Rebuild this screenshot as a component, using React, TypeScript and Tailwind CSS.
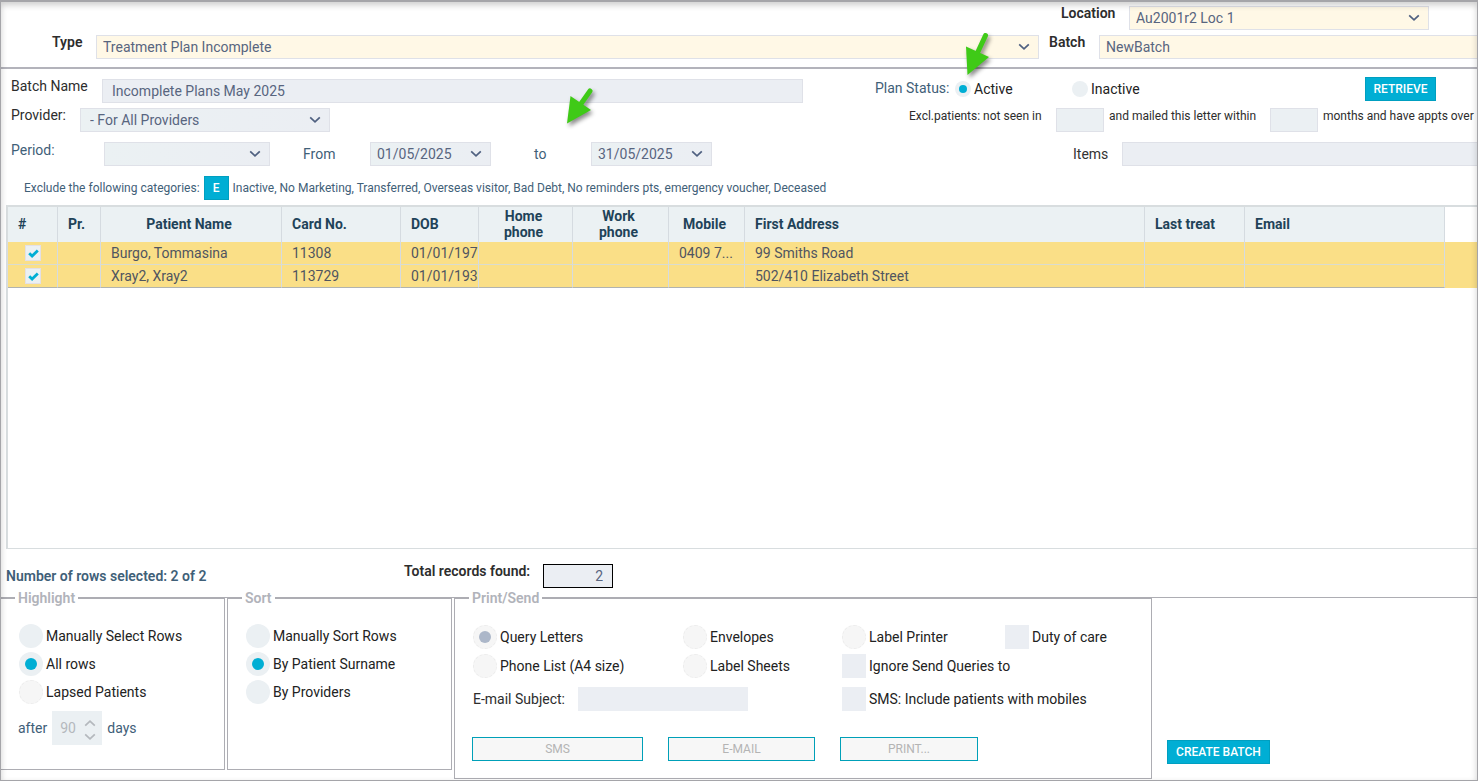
import type { InputHTMLAttributes, ReactNode } from "react";

const patients = [
  { name: "Burgo, Tommasina", card: "11308", dob: "01/01/197", mobile: "0409 7...", address: "99 Smiths Road" },
  { name: "Xray2, Xray2", card: "113729", dob: "01/01/193", mobile: "", address: "502/410 Elizabeth Street" },
];

const columns = [
  { title: "#", width: "w-[50px]", align: "text-left" },
  { title: "Pr.", width: "w-[43px]", align: "text-left" },
  { title: "Patient Name", width: "w-[181px]", align: "text-center" },
  { title: "Card No.", width: "w-[119px]", align: "text-left" },
  { title: "DOB", width: "w-[78px]", align: "text-left" },
  { title: "Home phone", width: "w-[94px]", align: "text-center" },
  { title: "Work phone", width: "w-[96px]", align: "text-center" },
  { title: "Mobile", width: "w-[76px]", align: "text-center" },
  { title: "First Address", width: "w-[400px]", align: "text-left" },
  { title: "Last treat", width: "w-[100px]", align: "text-left" },
  { title: "Email", width: "w-[200px]", align: "text-left" },
];

function Chevron({ className }: { className: string }) {
  return (
    <svg className={className} width="12" height="8" viewBox="0 0 12 8" fill="none" aria-hidden="true">
      <path d="M1.2 1.3 L6 5.9 L10.8 1.3" stroke="currentColor" strokeWidth="1.7" />
    </svg>
  );
}

function Arrow({ className, d, head }: { className: string; d: string; head: string }) {
  return (
    <svg
      className={`absolute pointer-events-none overflow-visible drop-shadow-[2px_3px_2px_rgba(0,0,0,0.45)] ${className}`}
      width="24"
      height="42"
      viewBox="0 0 24 42"
      aria-hidden="true"
    >
      <path d={d} stroke="#3fca17" strokeWidth="5" strokeLinecap="round" />
      <path d={head} fill="#3fca17" />
    </svg>
  );
}

interface SelectProps {
  label: string;
  value: string;
  className: string;
  fill?: string;
  inset?: string;
}

function Select({ label, value, className, fill = "bg-linear-to-r from-[#ebf1f3] to-[#ebeef3]", inset = "pl-1.5" }: SelectProps) {
  return (
    <div className={`relative h-6 ${className}`}>
      <select
        aria-label={label}
        className={`block h-6 w-full appearance-none border border-[#dfe1e8] text-sm text-[#58657f] ${fill} ${inset}`}
      >
        <option>{value}</option>
      </select>
      <Chevron className="pointer-events-none absolute top-2 right-[9px] text-[#4f6080]" />
    </div>
  );
}

interface ChoiceProps extends InputHTMLAttributes<HTMLInputElement> {
  children: ReactNode;
  small?: boolean;
}

function Radio({ children, small, ...props }: ChoiceProps) {
  return (
    <label className="flex items-center gap-[3px] text-[#222]">
      <input
        type="radio"
        className={`grid shrink-0 appearance-none place-items-center rounded-full bg-[#ebf0f3] before:rounded-full checked:before:bg-[#00aed4] disabled:border disabled:border-dashed disabled:border-[#ededed] disabled:bg-[#f6f6f6] disabled:checked:before:bg-[#acb7c9] ${
          small ? "size-4 before:size-2" : "size-6 before:size-3"
        }`}
        {...props}
      />
      {children}
    </label>
  );
}

function Check({ children, ...props }: ChoiceProps) {
  return (
    <label className="flex items-center gap-[3px] text-[#222]">
      <input type="checkbox" className="size-6 shrink-0 appearance-none bg-[#ebeef3] checked:bg-[#00aed4]" {...props} />
      {children}
    </label>
  );
}

function Group({ title, className, children }: { title: string; className: string; children: ReactNode }) {
  return (
    <fieldset className={`-mt-[7px] border border-[#adadb3] ${className}`}>
      <legend className="bg-white px-[3px] leading-[15px] font-semibold text-[#b1b3ba]">{title}</legend>
      {children}
    </fieldset>
  );
}

const field = "h-6 border border-[#dfe1e8] bg-[#ebeef3] text-sm text-[#58657f]";
const solidButton = "h-6 border border-[#009fc0] bg-[#00aed4] text-xs font-medium text-white";
const ghostButton = "h-6 border border-[#00a0b8] bg-[#f7f7f7] text-xs text-[#b4b4b4]";

function Header() {
  return (
    <header className="flex flex-col gap-[5px] border-b-2 border-[#b3b3bb] pt-1 pb-2">
      <div className="flex items-start justify-end pr-12">
        <span className="w-[68px] leading-[14px] font-semibold">Location</span>
        <Select label="Location" value="Au2001r2 Loc 1" className="w-[300px]" fill="bg-[#fff8e6]" />
      </div>
      <div className="flex items-start">
        <span className="w-[95px] pl-[51px] leading-[14px] font-semibold">Type</span>
        <Select label="Type" value="Treatment Plan Incomplete" className="min-w-0 flex-1" fill="bg-[#fff8e6]" />
        <label htmlFor="batch" className="w-[60px] pl-2.5 leading-[14px] font-semibold">
          Batch
        </label>
        <input
          id="batch"
          defaultValue="NewBatch"
          className="h-6 w-[378px] border border-r-0 border-[#dfe1e8] bg-[#fff8e6] pl-1.5 text-sm text-[#58657f]"
        />
      </div>
    </header>
  );
}

function Filters() {
  return (
    <section className="flex flex-col pt-2 pl-2.5">
      <div className="flex items-start justify-between">
        <div className="flex items-start pt-0.5">
          <label htmlFor="batch-name" className="w-[91px] leading-[14px]">
            Batch Name
          </label>
          <input id="batch-name" defaultValue="Incomplete Plans May 2025" className={`${field} w-[701px] pl-[9px]`} />
        </div>
        <div className="flex w-[602px] items-start">
          <span className="w-20 leading-[22px] text-[#3f6078]">Plan Status:</span>
          <div className="w-[117px] pt-1">
            <Radio name="plan-status" small defaultChecked>
              Active
            </Radio>
          </div>
          <div className="pt-1">
            <Radio name="plan-status" small>
              Inactive
            </Radio>
          </div>
          <button type="button" className={`${solidButton} mr-[41px] ml-auto w-[71px]`}>
            RETRIEVE
          </button>
        </div>
      </div>

      <div className="mt-[5px] flex items-start justify-between">
        <div className="flex items-start">
          <span className="w-[69px] leading-[14px]">Provider:</span>
          <Select label="Provider" value="- For All Providers" className="w-[250px]" inset="pl-[9px]" />
        </div>
        <div className="flex w-[568px] items-start text-xs leading-4 whitespace-nowrap">
          <label htmlFor="not-seen" className="w-[147px]">
            Excl.patients: not seen in
          </label>
          <input id="not-seen" className="h-6 w-12 border border-[#dfe1e8] bg-[#ebf0f3]" />
          <label htmlFor="mailed" className="w-[166px] pl-[5px]">
            and mailed this letter within
          </label>
          <input id="mailed" className="h-6 w-12 border border-[#dfe1e8] bg-[#ebf0f3]" />
          <span className="pl-[5px]">months and have appts over</span>
        </div>
      </div>

      <div className="mt-2.5 flex items-start justify-between text-[#3f6078]">
        <div className="flex items-start">
          <span className="w-[93px] leading-4">Period:</span>
          <Select label="Period" value="" className="w-[166px]" />
          <span className="w-[100px] pl-[33px] leading-6">From</span>
          <Select label="From" value="01/05/2025" className="w-[121px]" />
          <span className="w-[100px] pl-[43px] leading-6">to</span>
          <Select label="to" value="31/05/2025" className="w-[121px]" />
        </div>
        <div className="flex w-[404px] items-center">
          <label htmlFor="items" className="w-[49px] text-[#333]">
            Items
          </label>
          <input id="items" className={`${field} min-w-0 flex-1 border-r-0`} />
        </div>
      </div>

      <div className="mt-2.5 flex items-center gap-1 pl-[13px] text-xs text-[#3f6078]">
        <span>Exclude the following categories:</span>
        <button type="button" className={`${solidButton} w-[25px]`}>
          E
        </button>
        <span>
          Inactive, No Marketing, Transferred, Overseas visitor, Bad Debt, No reminders pts, emergency voucher, Deceased
        </span>
      </div>
    </section>
  );
}

function PatientTable() {
  const line = "border-r border-r-[#d5dbe0] border-b px-2.5";
  return (
    <div className="mt-[5px] ml-[5px] min-h-[344px] flex-1 border-t-2 border-b border-l-2 border-[#d8dddf]">
      <table className="w-full table-fixed border-separate border-spacing-0">
        <thead>
          <tr className="h-[35px]">
            {columns.map((c) => (
              <th
                key={c.title}
                className={`border-r border-[#d5dbe0] bg-[#ebf1f3] pr-3.5 pb-0.5 pl-2.5 leading-4 font-bold text-[#1f4359] ${c.width} ${c.align}`}
              >
                {c.title}
              </th>
            ))}
            <td />
          </tr>
        </thead>
        <tbody>
          {patients.map((p, i) => {
            const cell = `${line} ${i === patients.length - 1 ? "border-b-[#b0b3b0]" : "border-b-[#d9dcd0]"}`;
            return (
              <tr key={p.card} className="h-[23px] bg-[#fadf87] leading-[22px] whitespace-nowrap text-[#505560]">
                <td className={cell}>
                  <span className="relative ml-[7px] block size-4">
                    <input
                      type="checkbox"
                      aria-label={`Select ${p.name}`}
                      defaultChecked
                      className="peer block size-4 appearance-none border border-[#e3e0e6] bg-[#ebf0f3]"
                    />
                    <svg
                      className="pointer-events-none invisible absolute top-1 left-[3px] peer-checked:visible"
                      width="11"
                      height="10"
                      viewBox="0 0 11 10"
                      fill="none"
                      aria-hidden="true"
                    >
                      <path d="M1.2 4.3 L4.1 7.1 L9.8 1.6" stroke="#00aed4" strokeWidth="2.8" />
                    </svg>
                  </span>
                </td>
                <td className={cell} />
                <td className={cell}>{p.name}</td>
                <td className={cell}>{p.card}</td>
                <td className={`${cell} overflow-hidden pr-0`}>{p.dob}</td>
                <td className={cell} />
                <td className={cell} />
                <td className={cell}>{p.mobile}</td>
                <td className={cell}>{p.address}</td>
                <td className={cell} />
                <td className={cell} />
                <td />
              </tr>
            );
          })}
        </tbody>
      </table>
    </div>
  );
}

function Totals() {
  return (
    <div className="flex h-12 items-start pt-[15px] pl-[5px] font-semibold">
      <span className="w-[398px] leading-6 text-[#3f6078]">Number of rows selected: 2 of 2</span>
      <label htmlFor="total" className="w-[139px] leading-[14px]">
        Total records found:
      </label>
      <input
        id="total"
        readOnly
        value="2"
        className="h-6 w-[70px] border border-black bg-[#ebeef3] pr-[9px] text-right font-normal text-[#58657f]"
      />
    </div>
  );
}

function Actions() {
  return (
    <div className="flex items-start gap-0.5 border-t border-[#adadb3]">
      <Group title="Highlight" className="h-[179px] w-[224px] border-l-0 pl-[14px]">
        <div className="flex flex-col gap-1 pt-[18px] pl-1">
          <Radio name="highlight">Manually Select Rows</Radio>
          <Radio name="highlight" defaultChecked>
            All rows
          </Radio>
          <Radio name="highlight" disabled>
            Lapsed Patients
          </Radio>
        </div>
        <div className="mt-[7px] flex items-center gap-[5px] pl-[3px] text-[#3f6078]">
          <label htmlFor="lapsed-days">after</label>
          <div className="relative">
            <input
              id="lapsed-days"
              disabled
              defaultValue="90"
              className="block h-[34px] w-[50px] bg-[#ebf0f3] pl-2 text-sm text-[#b4b8bd]"
            />
            <Chevron className="absolute top-2 right-1.5 rotate-180 text-[#b4b8bd]" />
            <Chevron className="absolute right-1.5 bottom-1 text-[#b4b8bd]" />
          </div>
          <span>days</span>
        </div>
      </Group>

      <Group title="Sort" className="h-[179px] w-[225px] pl-[14px]">
        <div className="flex flex-col gap-1 pt-[18px] pl-1">
          <Radio name="sort">Manually Sort Rows</Radio>
          <Radio name="sort" defaultChecked>
            By Patient Surname
          </Radio>
          <Radio name="sort">By Providers</Radio>
        </div>
      </Group>

      <Group title="Print/Send" className="h-[188px] w-[698px] pl-[14px]">
        <div className="grid grid-cols-[210px_159px_163px_auto] gap-y-[5px] pt-[19px] pl-1">
          <Radio name="output" disabled defaultChecked>
            Query Letters
          </Radio>
          <Radio name="output" disabled>
            Envelopes
          </Radio>
          <Radio name="output" disabled>
            Label Printer
          </Radio>
          <Check>Duty of care</Check>
          <Radio name="output" disabled>
            Phone List (A4 size)
          </Radio>
          <Radio name="output" disabled>
            Label Sheets
          </Radio>
          <div className="col-span-2">
            <Check>Ignore Send Queries to</Check>
          </div>
          <div className="col-span-2 mt-1 flex items-center">
            <label htmlFor="subject" className="w-[105px]">
              E-mail Subject:
            </label>
            <input id="subject" className="h-6 w-[170px] bg-[#ebeef3] text-sm text-[#58657f]" />
          </div>
          <div className="col-span-2 mt-1">
            <Check>SMS: Include patients with mobiles</Check>
          </div>
        </div>
        <div className="mt-[26px] flex gap-[25px] pl-[3px]">
          <button type="button" disabled className={`${ghostButton} w-[171px]`}>
            SMS
          </button>
          <button type="button" disabled className={`${ghostButton} w-[147px]`}>
            E-MAIL
          </button>
          <button type="button" disabled className={`${ghostButton} w-[138px]`}>
            PRINT...
          </button>
        </div>
      </Group>

      <button type="button" className={`${solidButton} mt-[142px] ml-[13px] w-[103px]`}>
        CREATE BATCH
      </button>
    </div>
  );
}

export default function App() {
  return (
    <main className="relative flex min-h-screen flex-col overflow-hidden border border-t-2 border-[#a5a5a9] bg-white font-[Roboto,sans-serif] text-sm leading-4 text-[#2d2d2d]">
      <Header />
      <Filters />
      <PatientTable />
      <Totals />
      <Actions />
      <div className="h-px" />
      <Arrow className="top-8 right-[488px]" d="M20.5 1.5 L11 22" head="M1 12.5 L24 23 L2.5 41 Z" />
      <Arrow className="top-[86px] left-[565px]" d="M24 3 L12 20" head="M4.5 8 L25 22 L1 35.5 Z" />
      <div className="pointer-events-none absolute inset-0 shadow-[inset_0_3px_6px_rgba(0,0,0,0.2)]" />
    </main>
  );
}
